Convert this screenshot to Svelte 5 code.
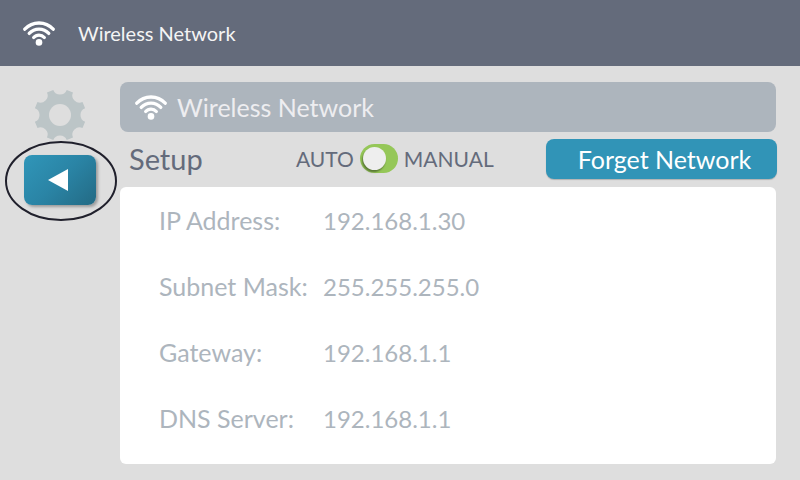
<script lang="ts">
  interface Setting {
    label: string;
    value: string;
  }

  const settings: Setting[] = [
    { label: "IP Address:", value: "192.168.1.30" },
    { label: "Subnet Mask:", value: "255.255.255.0" },
    { label: "Gateway:", value: "192.168.1.1" },
    { label: "DNS Server:", value: "192.168.1.1" },
  ];

  let manual = $state(false);

  /** Outline of an eight-toothed gear with scooped gaps between the teeth */
  function gearPath(center: number, radius: number) {
    const point = (deg: number) => {
      const a = (deg * Math.PI) / 180;
      return `${(center + radius * Math.cos(a)).toFixed(2)} ${(center + radius * Math.sin(a)).toFixed(2)}`;
    };
    let d = `M${point(-15)}`;
    for (let i = 0; i < 8; i++) {
      d += `A7.2 7.2 0 0 0 ${point(i * 45 + 15)}L${point(i * 45 + 30)}`;
    }
    return d + "Z";
  }

  const gear = gearPath(26, 26);
</script>

{#snippet wifi()}
  <svg class="wifi" viewBox="0 0 32 25" aria-hidden="true">
    <g fill="none" stroke="currentColor" stroke-width="3.3" stroke-linecap="round">
      <path d="M1.8 8.2C9.5 -.1 22.5 -.1 30.2 8.2"></path>
      <path d="M6.2 12.4C11.5 6.6 20.5 6.6 25.8 12.4"></path>
      <path d="M10.7 16.5C13.5 13.2 18.5 13.2 21.3 16.5"></path>
    </g>
    <circle cx="16" cy="21.4" r="3.3" fill="currentColor"></circle>
  </svg>
{/snippet}

<div class="screen">
  <header class="top-bar">
    {@render wifi()}
    <h1>Wireless Network</h1>
  </header>

  <div class="body">
    <nav class="sidebar">
      <svg class="gear" viewBox="0 0 52 52" aria-hidden="true">
        <path d={gear}></path>
        <circle cx="26" cy="26" r="11"></circle>
      </svg>
      <div class="back">
        <button type="button" class="back-button" aria-label="Back">
          <svg viewBox="0 0 20 22" aria-hidden="true">
            <path d="M0 11L20 0V22Z" fill="currentColor"></path>
          </svg>
        </button>
        <svg class="ring" viewBox="0 0 112 80" aria-hidden="true">
          <ellipse cx="56" cy="40" rx="55" ry="39"></ellipse>
        </svg>
      </div>
    </nav>

    <main>
      <div class="banner">
        {@render wifi()}
        <h2>Wireless Network</h2>
      </div>

      <div class="toolbar">
        <h3>Setup</h3>
        <label class="mode">
          <span>AUTO</span>
          <input type="checkbox" role="switch" bind:checked={manual} />
          <span>MANUAL</span>
        </label>
        <button type="button" class="forget">Forget Network</button>
      </div>

      <dl class="panel">
        {#each settings as setting (setting.label)}
          <div class="row">
            <dt>{setting.label}</dt>
            <dd>{setting.value}</dd>
          </div>
        {/each}
      </dl>
    </main>
  </div>
</div>

<style>
  :global(body) {
    margin: 0;
    background: #dedede;
  }

  .screen {
    display: flex;
    flex-direction: column;
    min-height: 100vh;
    background: #dedede;
    color: #646b7b;
    font-family: Lato, Carlito, sans-serif;
  }

  h1,
  h2,
  h3,
  dl,
  dd {
    margin: 0;
    font-weight: 400;
  }

  button {
    padding: 0;
    border: none;
    color: #fff;
    font-family: inherit;
    cursor: pointer;
  }

  .wifi {
    flex: none;
    width: 32px;
    height: 25px;
    color: #fff;
  }

  .top-bar {
    display: flex;
    align-items: center;
    gap: 23px;
    height: 66px;
    padding: 0 23px;
    background: #646b7b;
    color: #f4f4f4;
  }

  h1 {
    font-size: 20px;
    line-height: 24px;
  }

  .body {
    display: grid;
    flex: 1;
    grid-template-columns: 120px 1fr;
    padding: 16px 24px 16px 0;
  }

  .sidebar {
    display: flex;
    flex-direction: column;
    align-items: center;
    gap: 14px;
    padding-top: 7px;
  }

  .gear {
    width: 52px;
    height: 52px;
    fill: #bcc5c7;
  }

  .gear circle {
    fill: #dedede;
  }

  .back {
    position: relative;
  }

  .back-button {
    display: flex;
    align-items: center;
    justify-content: center;
    width: 72px;
    height: 50px;
    padding-right: 4px;
    border-radius: 8px;
    background: linear-gradient(135deg, #3096b9, #2a84a5 50%, #236a84);
    box-shadow: 2px 2px 3px rgba(0, 0, 0, 0.3);
  }

  .back-button svg {
    width: 20px;
    height: 22px;
  }

  .ring {
    position: absolute;
    top: -14px;
    left: -19px;
    width: 112px;
    height: 80px;
    fill: none;
    stroke: #20202c;
    stroke-width: 2;
    pointer-events: none;
  }

  main {
    display: flex;
    flex-direction: column;
  }

  .banner {
    display: flex;
    align-items: center;
    gap: 10px;
    height: 50px;
    padding: 0 15px;
    border-radius: 8px;
    background: #adb5bd;
    color: #ededf0;
  }

  h2 {
    font-size: 25px;
  }

  .toolbar {
    display: grid;
    grid-template-columns: 167px 1fr 231px;
    align-items: center;
    height: 53px;
    margin-right: -1px;
    padding: 0 0 2px 9px;
  }

  h3 {
    font-size: 29px;
  }

  .mode {
    display: flex;
    align-items: center;
    gap: 6px;
    font-size: 21px;
    cursor: pointer;
  }

  .mode input {
    flex: none;
    width: 38px;
    height: 29px;
    margin: 0;
    padding: 3px;
    border-radius: 15px;
    box-sizing: border-box;
    appearance: none;
    background: #95c758;
    cursor: pointer;
  }

  .mode input::before {
    display: block;
    width: 23px;
    height: 23px;
    border-radius: 50%;
    background: #eee;
    box-shadow: -1px 2px 2px rgba(0, 0, 0, 0.4);
    content: "";
  }

  .mode input:checked::before {
    margin-left: auto;
  }

  .forget {
    height: 40px;
    padding-left: 6px;
    border-radius: 8px;
    background: #3194b7;
    box-shadow: 0 1px 1px rgba(0, 0, 0, 0.2);
    font-size: 25px;
  }

  .panel {
    flex: 1;
    padding: 0 39px 12px;
    border-radius: 6px;
    background: #fff;
    color: #adb5bd;
    font-size: 24px;
  }

  .row {
    display: grid;
    grid-template-columns: 164px 1fr;
    align-items: baseline;
    height: 48px;
    padding-top: 18px;
    line-height: 30px;
  }

  dt {
    font-size: 25px;
  }
</style>
